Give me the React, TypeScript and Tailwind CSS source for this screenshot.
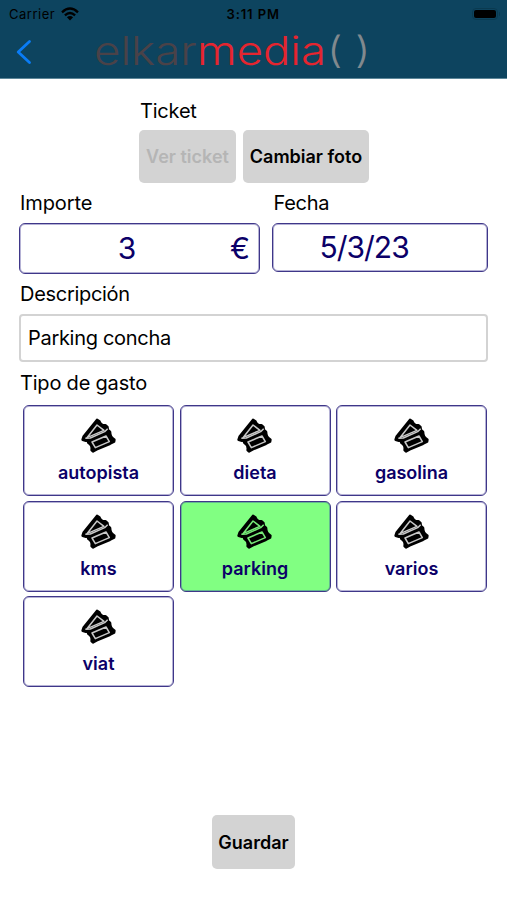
import clsx from "clsx";

const types = ["autopista", "dieta", "gasolina", "kms", "parking", "varios", "viat"];

function TicketIcon() {
  return (
    <svg className="size-[42px] shrink-0" viewBox="0 0 126 126" fill="none" strokeLinejoin="round">
      {/* back ticket */}
      <path
        d="M57 18 L64 22 Q68 35 82 34 L88 39 L90 52 L24 80 L14 77 L17 68 Z"
        fill="black"
        stroke="black"
        strokeWidth="8"
      />
      <path d="M27 71 L57 33 L78 49 Z" stroke="currentColor" strokeWidth="4.5" />
      {/* front ticket */}
      <path
        d="M29 78 L38 78 L84 58 L92 50 L96 54 Q96 70 109 77 L108 83 L96 89 L56 106 L45 112 L41 108 Q44 94 31 86 Z"
        fill="black"
        stroke="black"
        strokeWidth="8"
      />
      <path d="M22 73 L37 72 L80 53 L89 44" stroke="currentColor" strokeWidth="4.5" />
      <path d="M42 84 L84 66 L94 83 L52 101 Z" stroke="currentColor" strokeWidth="4.5" />
    </svg>
  );
}

function StatusBar() {
  return (
    <div className="flex h-7 items-center justify-between pl-[9px] pr-[7px] text-[13px]">
      <div className="flex w-[100px] items-center gap-[6px]">
        <span className="pt-px tracking-[0.5px]">Carrier</span>
        <svg width="18" height="14" viewBox="0 0 18 14">
          <g fill="none" stroke="black" strokeWidth="2.3">
            <path d="M1 5.3 Q9 -2.3 17 5.3" />
            <path d="M3.9 8.4 Q9 3.6 14.1 8.4" />
          </g>
          <path d="M9 13.4 L5.9 10.2 Q9 7.6 12.1 10.2 Z" />
        </svg>
      </div>
      <span className="-mr-1 -ml-[5px] w-[55px] pt-px font-semibold tracking-[0.9px] whitespace-nowrap">3:11 PM</span>
      <div className="flex w-[100px] items-center justify-end gap-px">
        <div className="h-3 w-[26px] rounded-[4px] border border-[#0a3a50] p-px">
          <div className="h-full rounded-[2px] bg-black" />
        </div>
        <div className="h-1 w-px rounded-r bg-[#0a3a50]" />
      </div>
    </div>
  );
}

function Header() {
  return (
    <header className="h-[79px] border-b border-[#5d8799] bg-[#0d445f]">
      <StatusBar />
      <div className="flex h-11 items-center pl-4">
        <svg className="mt-1" width="16" height="26" viewBox="0 0 16 26" fill="none" stroke="#0a7cf5" strokeWidth="2.8">
          <path d="M13.5 2.5 L2.2 13 L13.5 23.5" strokeLinecap="round" strokeLinejoin="round" />
        </svg>
        <h1 className="mt-[1px] ml-[62px] flex font-['Inter',sans-serif] text-[39px] leading-none font-[350] whitespace-nowrap">
          <span className="w-[103px] origin-left scale-x-[1.17] text-[#4a4248]">elkar</span>
          <span className="w-[130px] origin-left scale-x-[1.165] text-[#e5252f]">media</span>
          <span className="origin-left scale-x-[1.2] text-[37px] leading-[37px] text-[#81898e]">( )</span>
        </h1>
      </div>
    </header>
  );
}

function App() {
  return (
    <div className="flex h-[900px] w-[507px] flex-col bg-white font-['Inter',sans-serif] text-black">
      <Header />
      <main className="flex flex-1 flex-col px-[19px]">
        <section className="mt-[18px] ml-[120px]">
          <div className="h-[33px] pl-px text-[20px] leading-[28px] tracking-[-0.2px]">Ticket</div>
          <div className="flex gap-[7px]">
            <button disabled className="h-[53px] w-[97px] rounded-[5px] bg-[#d3d3d3] text-[18px] font-semibold text-[#b5b5b5]">
              Ver ticket
            </button>
            <button className="h-[53px] w-[126px] rounded-[5px] bg-[#d3d3d3] text-[18px] font-semibold">
              Cambiar foto
            </button>
          </div>
        </section>

        <section className="mt-[6px] flex gap-3">
          <div className="w-[242px]">
            <div className="h-[34px] pl-px text-[20px] leading-[28px] tracking-[-0.1px]">Importe</div>
            <div className="flex h-[51px] items-center rounded-[6px] border border-[#3f3789] text-[30px] text-[#0b0068] shadow-[inset_0_0_0_1px_#b5b2d5]">
              <span className="w-[214px] text-center">3</span>
              <span className="-ml-1">€</span>
            </div>
          </div>
          <div className="w-[216px]">
            <div className="h-[34px] pl-px text-[20px] leading-[28px] tracking-[-0.3px]">Fecha</div>
            <div className="flex h-[49px] items-center rounded-[6px] border border-[#3f3789] pl-[46px] text-[30px] tracking-[-1px] text-[#0b0068] shadow-[inset_0_0_0_1px_#b5b2d5]">
              5/3/23
            </div>
          </div>
        </section>

        <section className="mt-[6px]">
          <div className="h-[34px] pl-px text-[20px] leading-[28px] tracking-[-0.3px]">Descripción</div>
          <div className="flex h-[48px] w-[469px] items-center rounded-[4px] border-2 border-[#d3d3d3] pl-[7px] text-[20px] tracking-[-0.3px]">
            Parking concha
          </div>
        </section>

        <section className="mt-[7px]">
          <div className="h-[36px] pl-px text-[20px] leading-[28px] tracking-[-0.2px]">Tipo de gasto</div>
          <div className="ml-[4px] grid grid-cols-[repeat(3,151px)] gap-x-[5.5px] gap-y-[4.5px]">
            {types.map((type) => (
              <button
                key={type}
                className={clsx(
                  "flex h-[91px] flex-col items-center rounded-[6px] border border-[#3f3789] pt-2",
                  type === "parking"
                    ? "bg-[#81ff82] text-[#76ea77] shadow-[inset_0_0_0_1px_#63b890]"
                    : "bg-white text-[#c9c9c9] shadow-[inset_0_0_0_1px_#b5b2d5]"
                )}
              >
                <TicketIcon />
                <span className="mt-[3px] text-[18px] leading-7 font-semibold text-[#0b0068]">{type}</span>
              </button>
            ))}
          </div>
        </section>

        <button className="mt-auto mb-[31px] ml-[193px] h-[54px] w-[83px] rounded-[5px] bg-[#d3d3d3] text-[18px] font-semibold">
          Guardar
        </button>
      </main>
    </div>
  );
}

export default App;
